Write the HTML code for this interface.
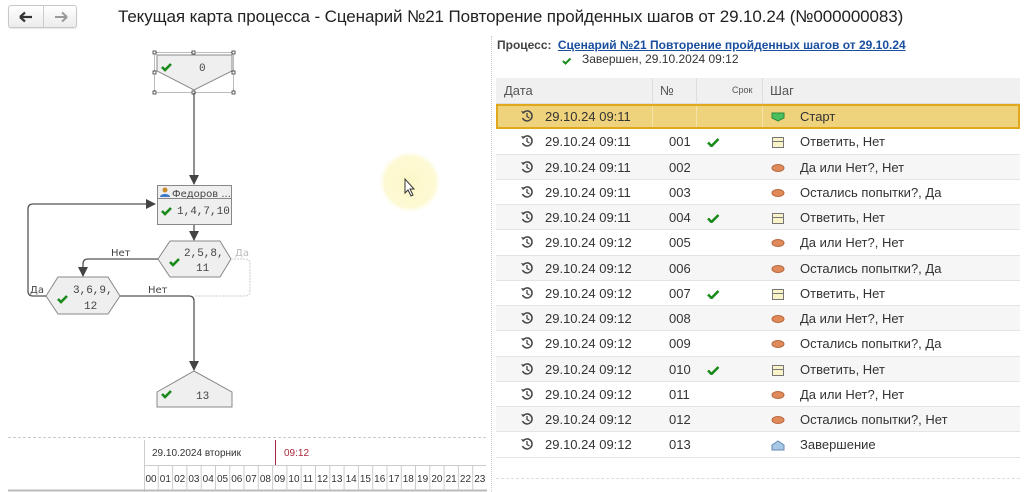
<!DOCTYPE html>
<html><head><meta charset="utf-8"><style>
*{margin:0;padding:0;box-sizing:border-box}
body{width:1024px;height:492px;overflow:hidden;background:#fff;font-family:"Liberation Sans",sans-serif;color:#333;position:relative}
.abs{position:absolute}
.nav{left:8px;top:5px;width:69px;height:23px;border:1px solid #c8c8c8;border-radius:3px;background:linear-gradient(#fff,#ececec);box-shadow:0 1px 1px rgba(0,0,0,.1)}
.nav .sep{position:absolute;left:34px;top:0;bottom:0;border-left:1px solid #ccc}
h1{position:absolute;left:118px;top:7px;font-size:17px;font-weight:normal;color:#222;white-space:nowrap;letter-spacing:-0.1px}
.tbl{left:496px;top:78px;width:524px}
.row{position:relative;height:25.25px;border-bottom:1px solid #e4e4e4;font-size:13px;color:#333}
.row.g{background:#f6f6f6}
.row span{position:absolute;top:5px}
.hdr{background:#f0f0f0;height:26px;border-bottom:1px solid #ddd}
.hdr span{color:#555}
.sel{background:#efd27c;border:2px solid #e2a81c}
.clk{left:24px;top:5px;width:14px;height:14px}
</style></head><body>
<div class="abs nav"><div class="sep"></div>
<svg class="abs" style="left:10px;top:5px" width="14" height="12"><path d="M1 6H13M1 6L6 1.5M1 6L6 10.5" stroke="#333" stroke-width="2.2" fill="none"/></svg>
<svg class="abs" style="left:45px;top:5px" width="14" height="12"><path d="M1 6H13M13 6L8 1.5M13 6L8 10.5" stroke="#999" stroke-width="2" fill="none"/></svg>
</div>
<h1>Текущая карта процесса - Сценарий №21 Повторение пройденных шагов от 29.10.24 (№000000083)</h1>

<div class="abs" style="left:491px;top:36px;bottom:0;border-left:1px dotted #ccc"></div>

<svg class="abs" style="left:0;top:0" width="490" height="492">
<defs><radialGradient id="gl"><stop offset="0" stop-color="#fdf8c8"/><stop offset=".8" stop-color="#fdf9d4"/><stop offset="1" stop-color="#fff" stop-opacity="0"/></radialGradient>
<marker id="ar" markerWidth="10" markerHeight="10" refX="9" refY="5" orient="auto" markerUnits="userSpaceOnUse"><path d="M0 0L10 5L0 10Z" fill="#444"/></marker></defs>
<circle cx="410" cy="182" r="32" fill="url(#gl)"/>
<path d="M405 179V193L408 190L411 196L413 195L410 189H414Z" fill="#fff" stroke="#333" stroke-width="1"/>
<g font-family="Liberation Mono,DejaVu Sans Mono,monospace" font-size="11" fill="#444">
<rect x="154.5" y="52.5" width="79" height="40" fill="none" stroke="#777" stroke-dasharray="1,1"/>
<path d="M157 55H232V71L194 90L157 71Z" fill="#efefef" stroke="#888"/>
<g fill="#fff" stroke="#333" stroke-width=".8"><rect x="153" y="51" width="3" height="3"/><rect x="192" y="51" width="3" height="3"/><rect x="232" y="51" width="3" height="3"/><rect x="153" y="71" width="3" height="3"/><rect x="232" y="71" width="3" height="3"/><rect x="153" y="91" width="3" height="3"/><rect x="192" y="91" width="3" height="3"/><rect x="232" y="91" width="3" height="3"/></g>
<text x="199" y="71">0</text>
<path d="M162 67l3 3 6-6" stroke="#1a8a1a" stroke-width="2.6" fill="none"/>
<path d="M194 93V184" stroke="#555" stroke-width="1.3" marker-end="url(#ar)"/>
<rect x="157.5" y="185.5" width="74" height="39" fill="#efefef" stroke="#888"/>
<path d="M158 198.5H231" stroke="#888"/>
<circle cx="165" cy="190" r="2.5" fill="#c88a2a"/><path d="M160 197c0-4 10-4 10 0z" fill="#3a7ac8"/>
<text x="172" y="197" font-family="DejaVu Sans,sans-serif" font-size="10">Федоров ...</text>
<path d="M162 211l3 3 6-6" stroke="#1a8a1a" stroke-width="2.6" fill="none"/>
<text x="177" y="214">1,4,7,10</text>
<path d="M194 225V240" stroke="#555" stroke-width="1.3" marker-end="url(#ar)"/>
<path d="M158 259L170 241H220L231 259L220 277H170Z" fill="#efefef" stroke="#888"/>
<text x="184" y="256">2,5,8,</text><text x="196" y="271">11</text>
<path d="M170 262l3 3 6-6" stroke="#1a8a1a" stroke-width="2.6" fill="none"/>
<text x="111" y="256" font-family="DejaVu Sans,sans-serif" font-size="10">Нет</text>
<text x="235" y="256" font-family="DejaVu Sans,sans-serif" font-size="10" fill="#bbb">Да</text>
<path d="M158 259H88Q83 259 83 264V276" stroke="#555" stroke-width="1.3" fill="none" marker-end="url(#ar)"/>
<path d="M231 259H245Q250 259 250 264V291Q250 296 245 296H194" stroke="#ccc" stroke-dasharray="2,1" fill="none"/>
<path d="M46 296L58 277H108L120 296L108 314H58Z" fill="#efefef" stroke="#888"/>
<text x="73" y="293">3,6,9,</text><text x="84" y="309">12</text>
<path d="M58 299l3 3 6-6" stroke="#1a8a1a" stroke-width="2.6" fill="none"/>
<text x="30" y="293" font-family="DejaVu Sans,sans-serif" font-size="10">Да</text>
<text x="148" y="293" font-family="DejaVu Sans,sans-serif" font-size="10">Нет</text>
<path d="M46 296H33Q28 296 28 291V209Q28 204 33 204H155" stroke="#555" stroke-width="1.3" fill="none" marker-end="url(#ar)"/>
<path d="M120 296H189Q194 296 194 301V370" stroke="#555" stroke-width="1.3" fill="none" marker-end="url(#ar)"/>
<path d="M157 392L194 371L232 392V407H157Z" fill="#efefef" stroke="#888"/>
<path d="M162 394l3 3 6-6" stroke="#1a8a1a" stroke-width="2.6" fill="none"/>
<text x="196" y="399">13</text>
</g>
<path d="M8 437.5H487" stroke="#ccc" stroke-dasharray="3,2"/>
<path d="M144.5 440V492M144 465.5H486" stroke="#ccc"/>
<path d="M275.5 440V465" stroke="#a8283a"/>
<path d="M8 490.5H487" stroke="#bbb" stroke-width="2"/>
<g font-family="Liberation Sans,sans-serif" font-size="10" fill="#333">
<text x="152" y="456">29.10.2024 вторник</text>
<text x="284" y="456" fill="#a8283a">09:12</text>
</g>
<g id="hrs" font-family="Liberation Sans,sans-serif" font-size="10" fill="#333"></g>
</svg>

<div class="abs" style="left:497px;top:38px;font-size:12px;white-space:nowrap"><b style="color:#444">Процесс:</b> <a style="color:#1a4fa0;font-weight:bold;text-decoration:underline;margin-left:3px">Сценарий №21 Повторение пройденных шагов от 29.10.24</a></div>
<svg class="abs" style="left:562px;top:57px" width="10" height="8"><path d="M1 4l2.5 2.5 5-5" stroke="#1a8a1a" stroke-width="2" fill="none"/></svg>
<div class="abs" style="left:582px;top:52px;font-size:12px">Завершен, 29.10.2024 09:12</div>

<div class="abs tbl" id="tbl">
<div class="row hdr"><span style="left:8px">Дата</span><span style="left:164px">№</span><span style="left:236px;font-size:9px;top:7px">Срок</span><span style="left:274px">Шаг</span>
<div class="abs" style="left:156px;top:0;bottom:0;border-left:1px solid #ddd"></div><div class="abs" style="left:200px;top:0;bottom:0;border-left:1px solid #ddd"></div><div class="abs" style="left:266px;top:0;bottom:0;border-left:1px solid #ddd"></div></div>
</div>
<script>
var rows=[["09:11","","","s","Старт"],["09:11","001",1,"r","Ответить, Нет"],["09:11","002",0,"o","Да или Нет?, Нет"],["09:11","003",0,"o","Остались попытки?, Да"],["09:11","004",1,"r","Ответить, Нет"],["09:12","005",0,"o","Да или Нет?, Нет"],["09:12","006",0,"o","Остались попытки?, Да"],["09:12","007",1,"r","Ответить, Нет"],["09:12","008",0,"o","Да или Нет?, Нет"],["09:12","009",0,"o","Остались попытки?, Да"],["09:12","010",1,"r","Ответить, Нет"],["09:12","011",0,"o","Да или Нет?, Нет"],["09:12","012",0,"o","Остались попытки?, Нет"],["09:12","013",0,"e","Завершение"]];
var ic={s:'<path d="M1 1H13V6L7 9L1 6Z" fill="#4cc060" stroke="#2a8a3a"/>',r:'<rect x="1.5" y="0.5" width="11" height="10" fill="#fbf3c8" stroke="#777"/><path d="M2 4.5H12" stroke="#777"/>',o:'<ellipse cx="7" cy="5" rx="6" ry="3.5" fill="#e08a5a" stroke="#b86a40"/>',e:'<path d="M1 5L7 1L13 5V10H1Z" fill="#a8c8e8" stroke="#6a8ab0"/>'};
var h="";rows.forEach(function(r,i){var cls=i==0?"row sel":(i%2==0?"row g":"row");
h+='<div class="'+cls+'"><svg class="abs clk" viewBox="0 0 14 14" style="left:'+(i==0?22:24)+'px;top:'+(i==0?3:5)+'px"><path d="M3 4A5 5 0 1 1 2.5 9" stroke="#444" stroke-width="1.5" fill="none"/><path d="M1 2L3 5L5.5 3Z" fill="#444"/><path d="M7 4V7.5L9.5 9" stroke="#444" stroke-width="1.3" fill="none"/></svg><span style="left:'+(i==0?47:49)+'px;top:'+(i==0?3:5)+'px">29.10.24 '+r[0]+'</span><span style="left:173px">'+r[1]+'</span>'+(r[2]?'<svg class="abs" style="left:211px;top:9px" width="13" height="9"><path d="M1 4.5l3.5 3.5 7-7" stroke="#1a8a1a" stroke-width="2.6" fill="none"/></svg>':'')+'<svg class="abs" style="left:'+(i==0?273:275)+'px;top:'+(i==0?6:8)+'px" width="14" height="11">'+ic[r[3]]+'</svg><span style="left:'+(i==0?302:304)+'px;top:'+(i==0?3:5)+'px">'+r[4]+'</span>'+(i==0?'<div class="abs" style="left:154px;top:0;bottom:0;border-left:1px solid #f6e2a8"></div><div class="abs" style="left:198px;top:0;bottom:0;border-left:1px solid #f6e2a8"></div><div class="abs" style="left:264px;top:0;bottom:0;border-left:1px solid #f6e2a8"></div>':'')+'</div>';});
document.getElementById("tbl").innerHTML+=h;
var g=document.getElementById("hrs"),s="";var w=(487-144)/24;
for(var k=0;k<24;k++){var x=144+k*w;s+='<text x="'+(x+1.5)+'" y="482">'+(k<10?"0"+k:k)+'</text>';if(k>0)s+='<path d="M'+x.toFixed(1)+' 466V490" stroke="#ccc"/>';}
g.innerHTML=s;
</script>
<div class="abs" style="left:496px;top:478px;width:524px;border-top:1px dashed #ddd"></div>
</body></html>
